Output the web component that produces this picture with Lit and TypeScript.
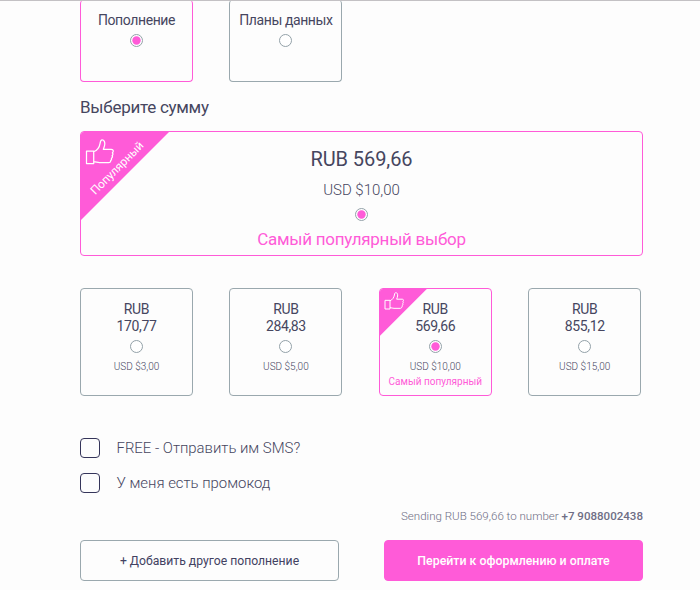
import { LitElement, html, css, svg, nothing } from "lit";
import { customElement, property } from "lit/decorators.js";

const thumb = svg`<path d="M1 12.5h7.5v13H1zM8.500 13.200c3.500-1.400 6-5 6.600-8.700.300-2.200.800-3.500 2.200-3.500 2 0 3 2.300 2.600 5-.200 1.700-.900 3.200-1.400 4.800h8.200c1.700 0 2.400 1.100 1.900 2.400l-.700 1.200c.800.900.700 2.100-.300 2.900.600 1 .300 2.100-.700 2.700.400 1.100-.100 2-.900 2.500.1 1.300-.7 2-2 2h-9.500c-2.300 0-3.500-.900-6-1" />`;

@customElement("radio-dot")
class RadioDot extends LitElement {
  @property({ type: Boolean }) checked = false;
  static styles = css`
    :host { display: block; width: 13px; height: 13px; }
    svg { display: block; }
  `;
  render() {
    return html`<svg width="13" height="13" viewBox="0 0 13 13">
      <circle cx="6.5" cy="6.5" r="6" fill="#fff" stroke="#93a1a8" />
      ${this.checked ? svg`<circle cx="6.5" cy="6.5" r="4.200" fill="#ff5bd8" />` : nothing}
    </svg>`;
  }
}

const amounts = [
  { rub: "170,77", usd: "USD $3,00", popular: false },
  { rub: "284,83", usd: "USD $5,00", popular: false },
  { rub: "569,66", usd: "USD $10,00", popular: true },
  { rub: "855,12", usd: "USD $15,00", popular: false },
];

@customElement("app-root")
class AppRoot extends LitElement {
  static styles = css`
    :host {
      display: block;
      box-sizing: border-box;
      width: 700px;
      height: 590px;
      overflow: hidden;
      background: #fdfdfd;
      color: #46465f;
      font-family: Roboto, sans-serif;
      border-top: 1px solid #c3c1c4;
    }
    * { box-sizing: border-box; }
    .page { width: 563px; margin-left: 80px; display: flex; flex-direction: column; }
    .row { display: grid; grid-template-columns: repeat(4, 113px); column-gap: 36.400px; }
    .card {
      position: relative;
      border: 1px solid #9aa8ae;
      border-radius: 4px;
      display: flex;
      flex-direction: column;
      align-items: center;
      overflow: hidden;
      white-space: nowrap;
    }
    .card.on { border-color: #ff5bd8; }
    .type { height: 82px; margin-top: -1px; padding-top: 12px; border-top: 0; }
    .type-name { font-size: 14px; letter-spacing: -0.400px; line-height: 16px; margin-bottom: 6px; }
    h2 { margin: 15px 0 0; font-size: 17px; letter-spacing: -0.270px; line-height: 20px; font-weight: 400; }
    .banner { height: 124.500px; margin-top: 14px; padding-top: 15px; }
    .banner-rub { font-size: 20px; letter-spacing: -0.080px; line-height: 24px; }
    .banner-usd { font-size: 15px; line-height: 20px; font-weight: 300; margin: 9px 0 7.500px; }
    .banner-note { font-size: 17px; letter-spacing: -0.270px; line-height: 20px; color: #ff5bd8; margin-top: 8.500px; }
    .corner { position: absolute; left: 0; top: 0; width: 88px; height: 88px; background: #ff5bd8; clip-path: polygon(0 0, 100% 0, 0 100%); }
    .corner svg { position: absolute; left: 3.500px; top: 7px; width: 29px; height: 26px; }
    .corner span { position: absolute; left: 36px; top: 35.500px; transform: translate(-50%, -50%) rotate(-45deg); font-size: 11.700px; line-height: 16px; color: #fff; }
    .corner.small { width: 47px; height: 47px; }
    .corner.small svg { left: 4px; top: 3px; width: 20px; height: 18px; }
    .corner.small path { stroke-width: 1.500; }
    path { fill: none; stroke: #fff; stroke-width: 1.300; stroke-linejoin: round; }
    .amounts { margin-top: 32.500px; }
    .amount { height: 108px; padding-top: 12px; }
    .rub { position: relative; font-size: 14px; letter-spacing: -0.350px; line-height: 16.500px; text-align: center; margin-bottom: 6px; }
    .usd { font-size: 10px; line-height: 12px; font-weight: 300; margin-top: 8px; }
    .note { font-size: 10px; line-height: 12px; color: #ff5bd8; margin-top: 3px; }
    .check { display: flex; align-items: center; gap: 16.500px; height: 20px; margin-top: 15px; font-size: 14.900px; line-height: 20px; font-weight: 300; white-space: nowrap; }
    .check.first { margin-top: 42px; }
    .box { width: 20px; height: 20px; border: 1px solid #35355a; border-radius: 4px; }
    .summary { text-align: right; font-size: 11.550px; line-height: 16px; font-weight: 300; margin-top: 15px; color: #6e6e85; }
    .summary b { font-weight: 500; }
    .actions { display: flex; justify-content: space-between; margin-top: 16px; }
    button { width: 259px; height: 41px; border: 1px solid #9aa8ae; border-radius: 4px; background: transparent; color: #424262; font: 400 12.200px Roboto, sans-serif; padding: 1px 0 0; white-space: nowrap; }
    button.go { background: #ff5bd8; border-color: #ff5bd8; color: #fff; font-weight: 500; font-size: 12.350px; }
  `;

  render() {
    const icon = html`<svg viewBox="0 0 29 27">${thumb}</svg>`;
    return html`<main class="page">
      <div class="row">
        <div class="card type on"><div class="type-name">Пополнение</div><radio-dot checked></radio-dot></div>
        <div class="card type"><div class="type-name">Планы данных</div><radio-dot></radio-dot></div>
      </div>
      <h2><span>Выберите сумму</span></h2>
      <div class="card banner on">
        <div class="corner">${icon}<span>Популярный</span></div>
        <div class="banner-rub">RUB 569,66</div>
        <div class="banner-usd">USD $10,00</div>
        <radio-dot checked></radio-dot>
        <div class="banner-note">Самый популярный выбор</div>
      </div>
      <div class="row amounts">
        ${amounts.map((a) => html`<div class="card amount ${a.popular ? "on" : ""}">
          ${a.popular ? html`<div class="corner small">${icon}</div>` : nothing}
          <div class="rub">RUB<br />${a.rub}</div>
          <radio-dot ?checked=${a.popular}></radio-dot>
          <div class="usd">${a.usd}</div>
          ${a.popular ? html`<div class="note">Самый популярный</div>` : nothing}
        </div>`)}
      </div>
      <label class="check first"><span class="box"></span><span>FREE - Отправить им SMS?</span></label>
      <label class="check"><span class="box"></span><span>У меня есть промокод</span></label>
      <div class="summary">Sending RUB 569,66 to number <b>+7 9088002438</b></div>
      <div class="actions">
        <button>+ Добавить другое пополнение</button>
        <button class="go">Перейти к оформлению и оплате</button>
      </div>
    </main>`;
  }
}
